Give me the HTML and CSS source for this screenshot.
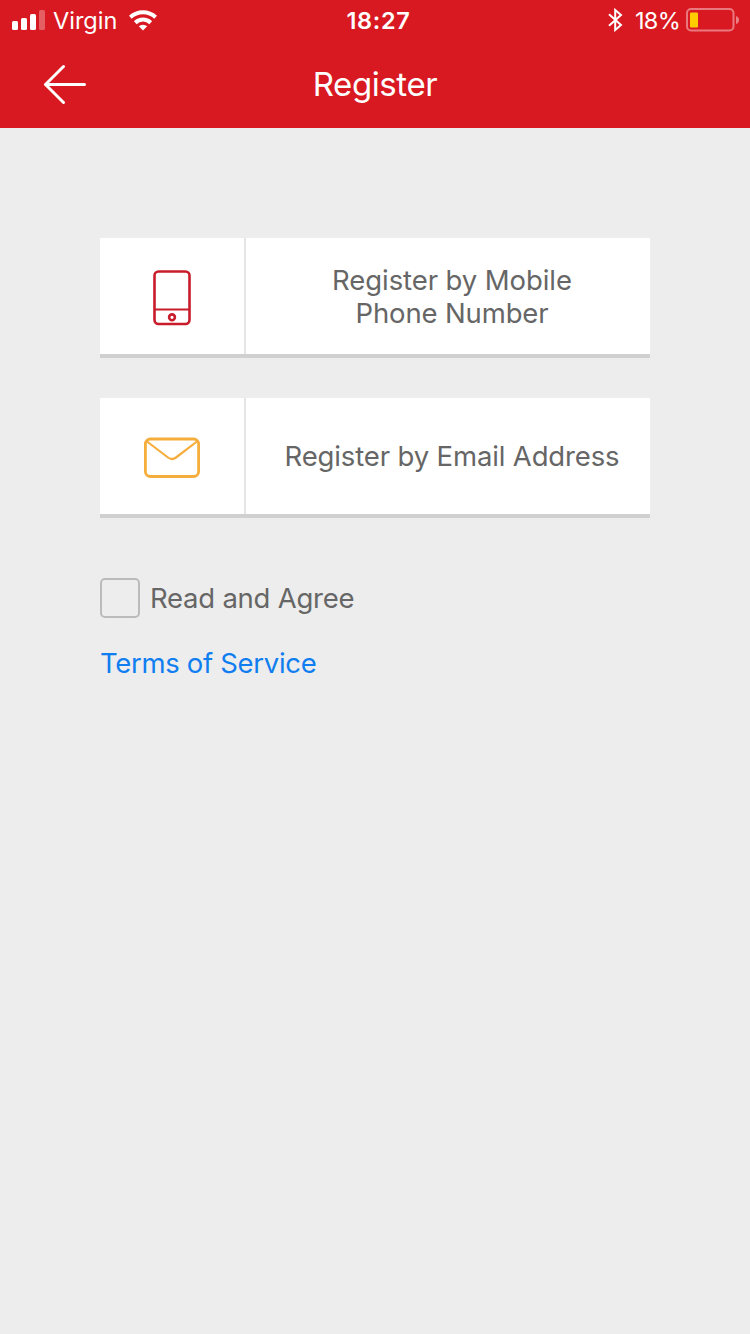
FILE: index.html
```html
<!DOCTYPE html>
<html lang="en">
<head>
<meta charset="utf-8">
<title>Register</title>
<link rel="stylesheet" href="styles.css">
</head>
<body>
<header class="header">
  <div class="status">
    <div class="status-left">
      <svg class="signal" width="33" height="20" viewBox="0 0 33 20" fill="#fff"><rect y="11" width="6" height="9" rx="1.5"/><rect x="9" y="8" width="6" height="12" rx="1.5"/><rect x="18" y="4" width="6" height="16" rx="1.5"/><rect x="27" width="6" height="20" rx="1.5" opacity=".3"/></svg>
      <span class="carrier">Virgin</span>
      <svg class="wifi" width="28" height="21" viewBox="0 0 28 21" fill="none" stroke="#fff" stroke-width="4"><path d="M1.300 7.200A18.500 18.500 0 0 1 26.700 7.200"/><path d="M6.300 12.700A11 11 0 0 1 21.700 12.700"/><path d="M14 20.500L9.800 16.300A6.400 6.400 0 0 1 18.200 16.300Z" fill="#fff" stroke="none"/></svg>
    </div>
    <span class="time">18:27</span>
    <div class="status-right">
      <svg width="15" height="24" viewBox="0 0 15 24" fill="none" stroke="#fff" stroke-width="2"><path d="M1 6.200L13 17L7.200 22V2L13 7L1 17.800"/></svg>
      <span class="percent">18%</span>
      <svg class="battery" width="54" height="24" viewBox="0 0 54 24"><rect x="1" y="1" width="46.500" height="21.500" rx="4" fill="none" stroke="#fff" stroke-opacity=".42" stroke-width="2"/><rect x="4" y="4.500" width="8" height="15" rx="1" fill="#fc0"/><path d="M50 8Q53 9 53 12T50 16Z" fill="#fff" fill-opacity=".45"/></svg>
    </div>
  </div>
  <div class="nav">
    <svg class="back" width="44" height="40" viewBox="0 0 44 40" fill="none" stroke="#fff" stroke-width="3" stroke-linecap="round" stroke-linejoin="round"><path d="M20.500 2.500L2.500 20.500L20.500 38.500M2.500 20.500H41.500"/></svg>
    <h1 class="title">Register</h1>
  </div>
</header>
<main class="content">
  <button class="option">
    <span class="option-icon"><svg width="38" height="56" viewBox="0 0 38 56" fill="none" stroke="#c91c2b" stroke-width="2.600"><rect x="1.500" y="1.500" width="35" height="52.500" rx="4"/><path d="M2 39.500H36" stroke-width="1.800"/><circle cx="19" cy="47.300" r="2.900"/></svg></span>
    <span class="option-label label-mobile"><span>Register by Mobile</span><span class="second-line">Phone Number</span></span>
  </button>
  <button class="option">
    <span class="option-icon"><svg width="56" height="42" viewBox="0 0 56 42" fill="none" stroke="#f5ad3c" stroke-width="2.800"><rect x="1.400" y="2" width="53.200" height="37.500" rx="5"/><path d="M3 4.500L24 20.500Q28 23.500 32 20.500L53 4.500" stroke-width="2.200"/></svg></span>
    <span class="option-label label-email">Register by Email Address</span>
  </button>
  <label class="agree"><span class="box"></span><span class="agree-text">Read and Agree</span></label>
  <a class="terms">Terms of Service</a>
</main>
</body>
</html>
```
FILE: styles.css
```css
* { box-sizing: border-box; }
body {
  margin: 0;
  min-height: 1334px;
  background: #ededed;
  color: #666;
  font: 27.5px/33px Inter, "Liberation Sans", sans-serif;
  white-space: nowrap;
}
svg { display: block; flex: none; }
.header { height: 128px; background: #d91921; color: #fff; }
.status {
  display: grid;
  grid-template-columns: 1fr auto 1fr;
  height: 40px;
  padding: 0 10px 0 12px;
  font-size: 23.5px;
  line-height: 38px;
}
.status-left, .status-right { display: flex; align-items: center; }
.status-right { justify-content: flex-end; }
.carrier { margin-left: 8px; width: 64px; padding-top: 2px; }
.wifi { margin-left: 12px; }
.time { font-weight: 600; letter-spacing: .7px; padding: 2px 0 0 5px; }
.percent { width: 46px; margin: 0 5px 0 12px; padding-top: 2px; letter-spacing: -.7px; }
.nav {
  display: grid;
  grid-template-columns: 1fr auto 1fr;
  align-items: center;
  height: 88px;
  padding: 0 43px;
}
.title { margin: 0; font-size: 33px; line-height: 88px; font-weight: 400; letter-spacing: -.4px; }
.content { display: flex; flex-direction: column; align-items: flex-start; padding: 110px 100px 0; }
.option {
  display: grid;
  grid-template-columns: 146px 1fr;
  width: 550px;
  height: 120px;
  margin: 0 0 40px;
  padding: 0;
  border: 0;
  border-bottom: 4px solid #d0d0d0;
  background: #fff;
  color: inherit;
  font: inherit;
}
.option-icon { display: flex; align-items: center; justify-content: center; height: 116px; padding-top: 3px; border-right: 2px solid #e5e5e5; }
.option-label { display: flex; flex-direction: column; align-items: center; justify-content: center; height: 116px; padding-left: 8px; }
.label-mobile { padding-top: 2px; letter-spacing: -.08px; }
.second-line { letter-spacing: -.14px; }
.label-email { letter-spacing: -.14px; }
.agree { display: flex; align-items: center; gap: 10px; height: 40px; margin-top: 20px; }
.agree-text { letter-spacing: -.24px; }
.box { width: 40px; height: 40px; border: 2px solid #bbb; border-radius: 5px; }
.terms { margin-top: 29px; color: #107ef0; letter-spacing: -.32px; }
```
